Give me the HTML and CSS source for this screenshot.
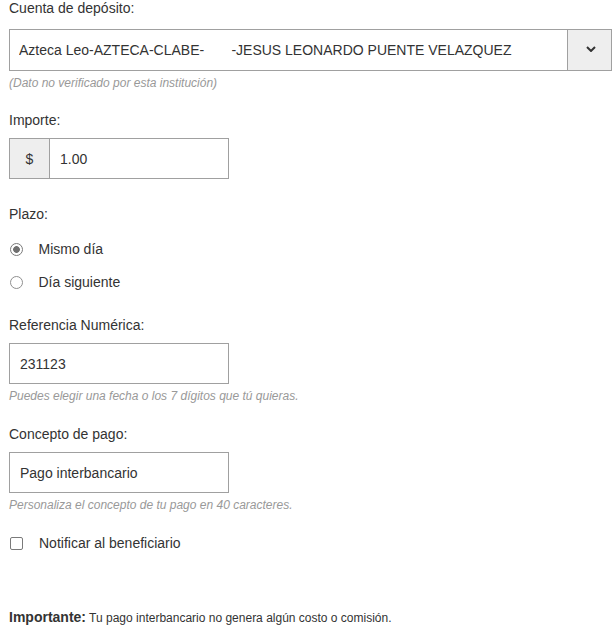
FILE: index.html
```html
<!DOCTYPE html>
<html lang="es">
<head>
<meta charset="utf-8">
<title>Transferencia interbancaria</title>
<link rel="stylesheet" href="styles.css">
</head>
<body>
<form class="form">
  <label class="label label-first" for="cuenta">Cuenta de depósito:</label>
  <div class="select-box">
    <select id="cuenta" class="select">
      <option>Azteca Leo-AZTECA-CLABE-&nbsp;&nbsp;&nbsp;&nbsp;&nbsp;&nbsp;&nbsp;-JESUS LEONARDO PUENTE VELAZQUEZ</option>
    </select>
    <span class="select-arrow">
      <svg width="10" height="6" viewBox="0 0 10 6"><polyline points="1,1 5,5 9,1" fill="none" stroke="#333" stroke-width="2"/></svg>
    </span>
  </div>
  <p class="help">(Dato no verificado por esta institución)</p>

  <label class="label sec-importe" for="importe">Importe:</label>
  <div class="input-group">
    <span class="addon">$</span>
    <input id="importe" class="group-input" type="text" value="1.00">
  </div>

  <p class="label sec-plazo">Plazo:</p>
  <div class="choices">
    <label class="choice"><input type="radio" name="plazo" class="radio" checked><span>Mismo día</span></label>
    <label class="choice"><input type="radio" name="plazo" class="radio"><span>Día siguiente</span></label>
  </div>

  <label class="label sec-ref" for="ref">Referencia Numérica:</label>
  <input id="ref" class="input" type="text" value="231123">
  <p class="help">Puedes elegir una fecha o los 7 dígitos que tú quieras.</p>

  <label class="label sec-concepto" for="concepto">Concepto de pago:</label>
  <input id="concepto" class="input" type="text" value="Pago interbancario">
  <p class="help">Personaliza el concepto de tu pago en 40 caracteres.</p>

  <label class="choice sec-notify"><input type="checkbox" class="check"><span>Notificar al beneficiario</span></label>

  <p class="note"><strong>Importante:</strong> Tu pago interbancario no genera algún costo o comisión.</p>
</form>
</body>
</html>
```

FILE: styles.css
```css
html, body {
  margin: 0;
  background: #fff;
}
body {
  padding: 0 0 0 9px;
  font-family: "Liberation Sans", Arial, sans-serif;
  color: #333;
}
.form {
  width: 603px;
  display: flex;
  flex-direction: column;
  align-items: flex-start;
}
.label {
  display: block;
  margin: 0 0 10px;
  font-size: 14px;
  line-height: 16px;
  color: #333;
}
.label-first {
  margin-bottom: 13px;
}
.sec-importe { margin-top: 21px; }
.sec-plazo { margin-top: 27px; margin-bottom: 0; }
.sec-ref { margin-top: 26px; }
.sec-concepto { margin-top: 22px; }

.help {
  margin: 4px 0 0;
  font-size: 12px;
  line-height: 16px;
  font-style: italic;
  color: #999;
}

.select-box {
  box-sizing: border-box;
  width: 603px;
  height: 42px;
  border: 1px solid #a0a0a0;
  display: flex;
  background: #fff;
}
.select {
  flex: 1;
  min-width: 0;
  appearance: none;
  -webkit-appearance: none;
  border: 0;
  outline: none;
  background: #fff;
  margin: 0;
  padding: 0 0 0 9px;
  font-family: "Liberation Sans", Arial, sans-serif;
  font-size: 14px;
  color: #333;
}
.select-arrow {
  box-sizing: border-box;
  width: 44px;
  border-left: 1px solid #a0a0a0;
  background: #eee;
  display: flex;
  align-items: center;
  justify-content: center;
  padding: 0 0 2px 2px;
}
.select-arrow svg {
  display: block;
}

.input-group {
  box-sizing: border-box;
  width: 220px;
  height: 41px;
  border: 1px solid #a0a0a0;
  display: flex;
}
.addon {
  box-sizing: border-box;
  width: 40px;
  border-right: 1px solid #a0a0a0;
  background: #eee;
  display: flex;
  align-items: center;
  justify-content: center;
  font-size: 14px;
  color: #333;
}
.group-input {
  flex: 1;
  min-width: 0;
  border: 0;
  outline: none;
  margin: 0;
  padding: 0 10px;
  font-family: "Liberation Sans", Arial, sans-serif;
  font-size: 14px;
  color: #333;
  background: #fff;
}
.input {
  box-sizing: border-box;
  width: 220px;
  height: 41px;
  margin: 0;
  border: 1px solid #a0a0a0;
  border-radius: 0;
  outline: none;
  padding: 0 10px;
  font-family: "Liberation Sans", Arial, sans-serif;
  font-size: 14px;
  color: #333;
  background: #fff;
}

.choices {
  display: flex;
  flex-direction: column;
  gap: 13px;
  margin-top: 17px;
}
.choice {
  display: flex;
  align-items: center;
  gap: 16px;
  height: 20px;
  font-size: 14px;
  color: #333;
}
.radio, .check {
  appearance: none;
  -webkit-appearance: none;
  box-sizing: border-box;
  width: 13px;
  height: 13px;
  margin: 0 0 0 1px;
  border: 1px solid #8f8f8f;
  background: #fff;
  flex: none;
}
.radio {
  border-radius: 50%;
  margin-left: 0.5px;
}
.radio:checked {
  border-color: #7a7a7a;
  background: radial-gradient(circle, #707070 0 3px, #fff 3.7px);
}
.check {
  border-radius: 2px;
  border-color: #7a7a7a;
}
.sec-notify {
  margin-top: 20px;
}
.choices + .sec-ref {
  margin-top: 25px;
}

.note {
  margin: 56px 0 0;
  font-size: 12px;
  line-height: 16px;
  color: #333;
}
.note strong {
  font-size: 14px;
  font-weight: bold;
}
```
